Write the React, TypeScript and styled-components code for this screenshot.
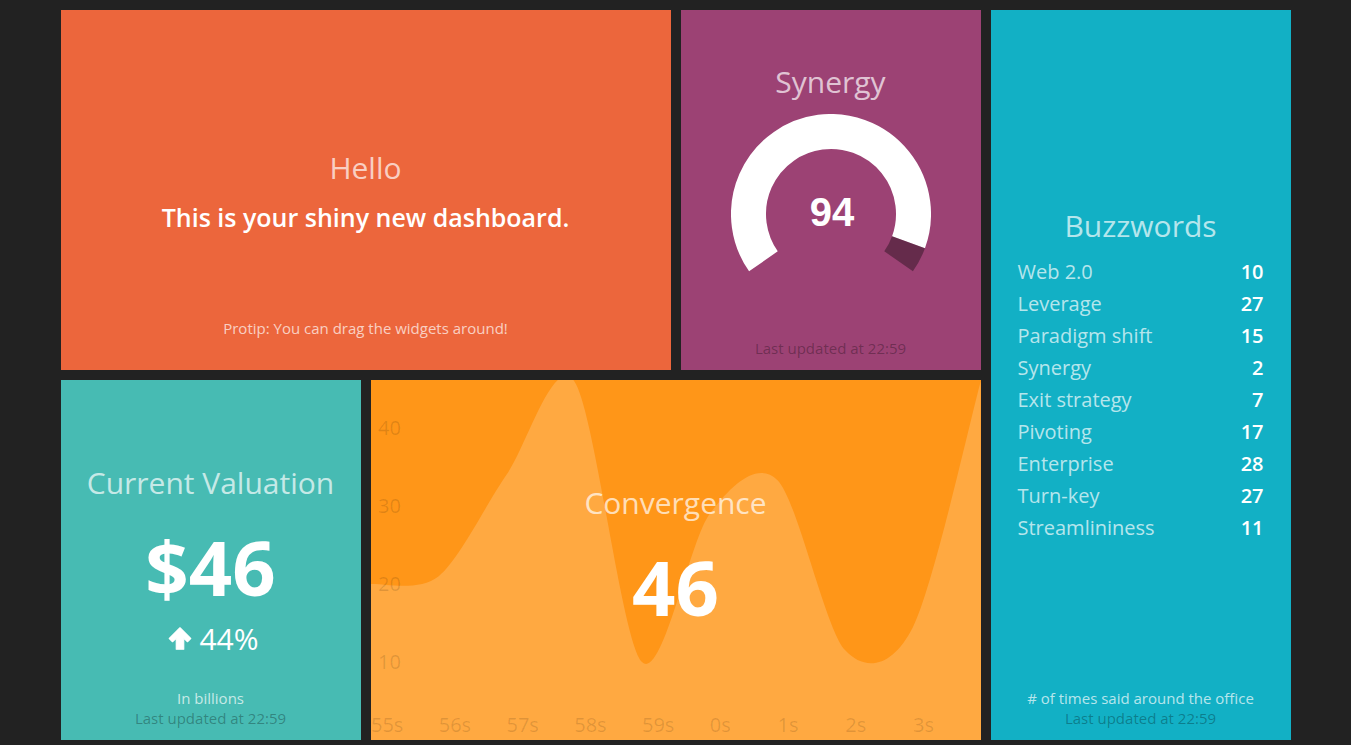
import React from 'react';
import styled, { createGlobalStyle } from 'styled-components';

const GlobalStyle = createGlobalStyle`
  html, body {
    margin: 0;
    padding: 0;
    background-color: #222222;
  }
  body {
    font-family: "Open Sans", "Liberation Sans", Arial, sans-serif;
    color: #fff;
    overflow: hidden;
  }
`;

const Board = styled.div`
  display: grid;
  grid-template-columns: repeat(4, 300px);
  grid-auto-rows: 360px;
  gap: 10px;
  width: 1230px;
  margin: 10px auto 0;
`;

const Widget = styled.div<{ $bg: string; $col?: string; $row?: string }>`
  position: relative;
  box-sizing: border-box;
  display: grid;
  grid-template-rows: minmax(0, 1fr) auto minmax(0, 1fr);
  padding: 12px;
  overflow: hidden;
  text-align: center;
  background-color: ${(p) => p.$bg};
  grid-column: ${(p) => p.$col || 'auto'};
  grid-row: ${(p) => p.$row || 'auto'};
`;

const Body = styled.div`
  grid-row: 2;
  position: relative;
  z-index: 1;
`;

const Title = styled.h1`
  margin: 0 0 12px;
  font-size: 30px;
  font-weight: 400;
  color: rgba(255, 255, 255, 0.7);
`;

const Subtitle = styled.h3`
  margin: 0;
  font-size: 25px;
  font-weight: 600;
  color: #fff;
`;

const BigValue = styled.h2`
  margin: 0;
  font-size: 76px;
  font-weight: 700;
  color: #fff;
`;

const ChangeRate = styled.p`
  margin: 0;
  padding-left: 6px;
  font-size: 30px;
  font-weight: 400;
  color: #fff;
  display: flex;
  align-items: center;
  justify-content: center;
  gap: 7px;
`;

const Footer = styled.div`
  grid-row: 3;
  align-self: end;
  font-size: 15px;
  line-height: 20px;
`;

const MoreInfo = styled.p`
  margin: 0;
  color: rgba(255, 255, 255, 0.7);
`;

const UpdatedAt = styled.p`
  margin: 0;
  min-height: 20px;
  color: rgba(0, 0, 0, 0.3);
`;

const GaugeBox = styled.div`
  height: 205px;
  svg {
    display: block;
    margin: 0 auto;
  }
`;

const List = styled.ul`
  margin: 0 15px;
  padding: 0;
  list-style: none;
  text-align: left;
`;

const ListItem = styled.li`
  display: flex;
  justify-content: space-between;
  margin-bottom: 5px;
  font-size: 20px;
`;

const Label = styled.span`
  color: rgba(255, 255, 255, 0.7);
`;

const Count = styled.span`
  margin-left: 12px;
  font-weight: 600;
  color: #fff;
`;

const Chart = styled.svg`
  position: absolute;
  left: 0;
  top: 0;
`;

const TickText = styled.text`
  font-family: "Open Sans", "Liberation Sans", sans-serif;
  font-size: 20px;
  fill: rgba(0, 0, 0, 0.12);
`;

const buzzwords: [string, number][] = [
  ['Web 2.0', 10],
  ['Leverage', 27],
  ['Paradigm shift', 15],
  ['Synergy', 2],
  ['Exit strategy', 7],
  ['Pivoting', 17],
  ['Enterprise', 28],
  ['Turn-key', 27],
  ['Streamlininess', 11],
];

const polar = (r: number, deg: number) => {
  const a = (deg * Math.PI) / 180;
  return [100 + r * Math.sin(a), 100 - r * Math.cos(a)];
};

const arc = (r: number, from: number, to: number) => {
  const [x1, y1] = polar(r, from);
  const [x2, y2] = polar(r, to);
  const large = to - from > 180 ? 1 : 0;
  return `M${x1},${y1} A${r},${r} 0 ${large} 1 ${x2},${y2}`;
};

const Gauge: React.FC<{ value: number }> = ({ value }) => {
  const start = -125;
  const sweep = 250;
  const end = start + (sweep * value) / 100;
  return (
    <svg width={200} height={200} viewBox="0 0 200 200">
      <path d={arc(82.5, start, end)} stroke="#fff" strokeWidth={35} fill="none" />
      <path d={arc(82.5, end, start + sweep)} stroke="rgba(0,0,0,0.35)" strokeWidth={35} fill="none" />
      <text
        x={101}
        y={112}
        textAnchor="middle"
        fill="#fff"
        style={{ font: 'bold 40px "Liberation Sans", Arial, sans-serif' }}
      >
        {value}
      </text>
    </svg>
  );
};

// cardinal spline like rickshaw draws it
const cardinalArea = (pts: [number, number][], w: number, h: number) => {
  const k = 0.15;
  const tan = pts.map((p, i) => {
    const a = pts[Math.max(0, i - 1)];
    const b = pts[Math.min(pts.length - 1, i + 1)];
    return [k * (b[0] - a[0]), k * (b[1] - a[1])];
  });
  let d = `M${pts[0][0]},${pts[0][1]}`;
  for (let i = 1; i < pts.length; i++) {
    const p0 = pts[i - 1];
    const p1 = pts[i];
    d += ` C${p0[0] + tan[i - 1][0]},${p0[1] + tan[i - 1][1]} ${p1[0] - tan[i][0]},${p1[1] - tan[i][1]} ${p1[0]},${p1[1]}`;
  }
  return `${d} L${w},${h} L0,${h} Z`;
};

const ConvergenceChart: React.FC = () => {
  const w = 610;
  const h = 360;
  const step = 67.75;
  const values = [20, 21, 34, 46, 10, 29, 33.3, 11.5, 14.5, 46];
  const y = (v: number) => h - 7.8 * v;
  const pts = values.map((v, i) => [i * step, y(v)] as [number, number]);
  const xLabels = ['55s', '56s', '57s', '58s', '59s', '0s', '1s', '2s', '3s'];
  return (
    <Chart width={w} height={h} viewBox={`0 0 ${w} ${h}`}>
      <path d={cardinalArea(pts, w, h)} fill="rgba(255,255,255,0.18)" />
      {[10, 20, 30, 40].map((t) => (
        <TickText key={t} x={7} y={y(t) + 7}>
          {t}
        </TickText>
      ))}
      {xLabels.map((l, i) => (
        <TickText key={l} x={i * step} y={352}>
          {l}
        </TickText>
      ))}
    </Chart>
  );
};

const ArrowUp: React.FC = () => (
  <svg width={24} height={23} viewBox="0 0 24 24">
    <path
      d="M12 0.8 L23.2 12 L19.8 15.4 L15.9 11.5 V23.2 H8.1 V11.5 L4.2 15.4 L0.8 12 Z"
      fill="#fff"
      stroke="#fff"
      strokeWidth={1.2}
      strokeLinejoin="round"
    />
  </svg>
);

const App: React.FC = () => {
  return (
    <>
      <GlobalStyle />
      <Board>
        <Widget $bg="#ec663c" $col="1 / span 2" $row="1">
          <Body>
            <Title>Hello</Title>
            <Subtitle>This is your shiny new dashboard.</Subtitle>
          </Body>
          <Footer>
            <MoreInfo>Protip: You can drag the widgets around!</MoreInfo>
            <UpdatedAt />
          </Footer>
        </Widget>

        <Widget $bg="#9c4274" $col="3" $row="1">
          <Body>
            <Title>Synergy</Title>
            <GaugeBox>
              <Gauge value={94} />
            </GaugeBox>
          </Body>
          <Footer>
            <UpdatedAt>Last updated at 22:59</UpdatedAt>
          </Footer>
        </Widget>

        <Widget $bg="#12b0c5" $col="4" $row="1 / span 2">
          <Body>
            <Title>Buzzwords</Title>
            <List>
              {buzzwords.map(([label, n]) => (
                <ListItem key={label}>
                  <Label>{label}</Label>
                  <Count>{n}</Count>
                </ListItem>
              ))}
            </List>
          </Body>
          <Footer>
            <MoreInfo># of times said around the office</MoreInfo>
            <UpdatedAt>Last updated at 22:59</UpdatedAt>
          </Footer>
        </Widget>

        <Widget $bg="#47bbb3" $col="1" $row="2">
          <Body>
            <Title>Current Valuation</Title>
            <BigValue>$46</BigValue>
            <ChangeRate>
              <ArrowUp />
              <span>44%</span>
            </ChangeRate>
          </Body>
          <Footer>
            <MoreInfo>In billions</MoreInfo>
            <UpdatedAt>Last updated at 22:59</UpdatedAt>
          </Footer>
        </Widget>

        <Widget $bg="#ff9618" $col="2 / span 2" $row="2">
          <ConvergenceChart />
          <Body>
            <Title>Convergence</Title>
            <BigValue>46</BigValue>
          </Body>
        </Widget>
      </Board>
    </>
  );
};

export default App;
